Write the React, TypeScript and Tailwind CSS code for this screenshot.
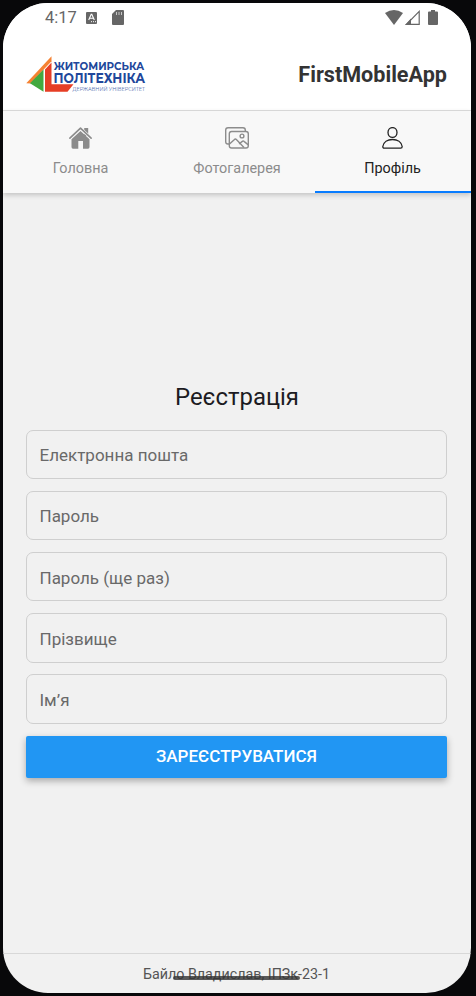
import React from "react";

const fields = ["Електронна пошта", "Пароль", "Пароль (ще раз)", "Прізвище", "Ім’я"];

function Logo() {
  return (
    <svg className="h-[38px] w-[120px] overflow-visible" viewBox="0 0 120 38">
      <path d="M.3 27.200 25.500.200v5L4.500 27.600Z" fill="#f58232" />
      <path d="M4 27.200 17.500 13.500V35.800Z" fill="#43a93f" />
      <path d="M19 13.500 25.500 6.500v21.700h22L41.500 35.800H19Z" fill="#e63e25" />
      <g fill="#21479b" fontFamily="Montserrat, Inter, sans-serif">
        <text x="27.800" y="14" fontSize="10.300" fontWeight="700" textLength="90.500" lengthAdjust="spacingAndGlyphs">ЖИТОМИРСЬКА</text>
        <text x="27.500" y="26.800" fontSize="14" fontWeight="700" textLength="91.500" lengthAdjust="spacingAndGlyphs">ПОЛІТЕХНІКА</text>
        <text x="46.500" y="34.800" fontSize="5.600" textLength="72.500" lengthAdjust="spacingAndGlyphs" opacity=".8">ДЕРЖАВНИЙ УНІВЕРСИТЕТ</text>
      </g>
    </svg>
  );
}

function StatusBar() {
  return (
    <div className="flex h-[29px] items-center pl-[42px] pr-[33px] text-[#666]">
      <span className="w-[34px] whitespace-nowrap text-[16.5px] leading-[29px]">4:17</span>
      <svg className="ml-[7px] h-3 w-[11px]" viewBox="0 0 11 12">
        <rect width="11" height="12" rx="1" fill="#666" />
        <path d="M2.700 8 5.200 2.400h.6L8.300 8M3.700 6.200h3.600" fill="none" stroke="#fff" strokeWidth="1.100" />
        <path d="M5 9.700h1M7 9.700h1M9 9.700h1" stroke="#fff" />
      </svg>
      <svg className="ml-[15px] h-[15px] w-3" viewBox="0 0 12 15">
        <path d="M4 0h7q1 0 1 1v13q0 1-1 1H1q-1 0-1-1V4Z" fill="#666" />
        <path d="M4.500 2v3M7 2v3M9.500 2v3" stroke="#fff" strokeOpacity=".8" strokeWidth=".8" />
      </svg>
      <div className="ml-auto flex items-center">
        <svg className="h-[15px] w-[18px]" viewBox="0 0 18 15">
          <path d="M0 3Q9-3 18 3L9 15Z" fill="#666" />
        </svg>
        <svg className="ml-[2px] h-[15px] w-[15px]" viewBox="0 0 15 15">
          <path d="M1.500 14.300H14.200V1.400Z" fill="none" stroke="#666" strokeWidth="1.200" />
          <path d="m0 15 6-6.500V15Z" fill="#666" />
        </svg>
        <svg className="ml-[8px] h-[15px] w-[10px]" viewBox="0 0 10 15">
          <path d="M3 0h4v1.500h2q1 0 1 1V14q0 1-1 1H1q-1 0-1-1V2.500q0-1 1-1h2Z" fill="#666" />
        </svg>
      </div>
    </div>
  );
}

function HomeIcon() {
  return (
    <svg className="h-[22px] w-[23px]" viewBox="0 0 23 22">
      <path d="M15.200 1h4v8h-4Z" fill="#8c8c8c" />
      <path d="M.9 11.200 11.500 1.500l10.600 9.700" fill="none" stroke="#f8f8f8" strokeWidth="3" />
      <path d="M.9 11.200 11.500 1.200l10.600 10" fill="none" stroke="#8c8c8c" strokeWidth="1.600" strokeLinecap="round" strokeLinejoin="round" />
      <path d="m11.500 3.900 9 8.300V20q0 1.700-1.500 1.700h-5V14H9.300v7.700H4Q2.500 21.700 2.500 20v-7.800Z" fill="#8c8c8c" />
    </svg>
  );
}

function GalleryIcon() {
  return (
    <svg className="h-[22px] w-6" viewBox="0 0 24 22" fill="none" stroke="#8c8c8c" strokeWidth="1.400" strokeLinejoin="round">
      <path d="M4.300 17H3Q.7 17 .7 14.700V3Q.7.700 3 .7h15q2.300 0 2.300 2.300v1" />
      <rect x="4.300" y="4.500" width="19" height="16.500" rx="2.300" />
      <circle cx="17" cy="9" r="1.900" />
      <path d="m4.500 17 4.700-4.300q1.200-1.200 2.400 0L19 20.500M14 17l3-2.400q1.200-1 2.300 0l4 3.300" />
    </svg>
  );
}

function PersonIcon() {
  return (
    <svg className="h-[22px] w-[21px]" viewBox="0 0 21 22" fill="none" stroke="#222" strokeWidth="1.300">
      <ellipse cx="10.500" cy="5.500" rx="4.500" ry="4.900" />
      <path d="M.8 19.500C1.500 15 5.600 12.500 10.500 12.500s9 2.500 9.700 7q0 1.600-1.500 1.600H2.300Q.8 21.100.8 19.500Z" />
    </svg>
  );
}

export default function App() {
  return (
    <div className="h-[996px] w-[476px] bg-[#08080a] pl-[3px] pt-[3px] font-['Roboto','Noto_Sans',sans-serif]">
      <div className="flex h-[990px] w-[468px] flex-col overflow-hidden rounded-[45px] bg-[#f1f1f1]">
        <header className="h-[108px] shrink-0 border-b border-[#dedede] bg-white">
          <StatusBar />
          <div className="flex items-start justify-between pl-[23px] pr-[24px] pt-[24px]">
            <Logo />
            <h1 className="mt-[5px] text-[21.6px] font-bold leading-[28px] text-[#333]">FirstMobileApp</h1>
          </div>
        </header>
        <nav className="z-10 grid h-[82px] shrink-0 grid-cols-3 bg-[#f8f8f8] text-[14.4px] text-[#8c8c8c] shadow-[0_2px_5px_rgba(0,0,0,0.2)]">
          <div className="flex flex-col items-center pr-px pt-[16px]">
            <HomeIcon />
            <span className="mt-[11px] leading-[18px]">Головна</span>
          </div>
          <div className="flex flex-col items-center pt-[16px]">
            <GalleryIcon />
            <span className="mt-[11px] leading-[18px]">Фотогалерея</span>
          </div>
          <div className="flex flex-col items-center border-b-2 border-[#087cff] pr-px pt-[16px] text-[#222]">
            <PersonIcon />
            <span className="mt-[11px] leading-[18px]">Профіль</span>
          </div>
        </nav>
        <main className="flex flex-1 flex-col pl-[23px] pr-[24px] pt-[189px]">
          <h2 className="mb-[17.6px] pl-px text-center text-[23.9px] leading-[30px] text-[#1c1b22]">Реєстрація</h2>
          <form className="flex flex-col gap-[11.8px]">
            {fields.map((label) => (
              <input
                key={label}
                aria-label={label}
                placeholder={label}
                className="h-[49.4px] w-full rounded-[7px] border border-[#cfcfcf] bg-transparent px-[12.5px] pt-[2px] text-[17px] text-[#333] placeholder:text-[#696969]"
              />
            ))}
            <button type="button" className="h-[42px] rounded-[2px] bg-[#2196f3] pt-px text-[17px] font-medium text-white shadow-[0_3px_7px_rgba(0,0,0,0.3)]">
              ЗАРЕЄСТРУВАТИСЯ
            </button>
          </form>
        </main>
        <footer className="relative h-[40px] shrink-0 border-t border-[#d8d8d8] pr-px text-center text-[14.3px] leading-[41px] text-[#555]">
          <span>Байло Владислав, ІПЗк-23-1</span>
          <div className="absolute left-[170px] top-[22px] h-1 w-[127px] rounded-full bg-[#333]/80" />
        </footer>
      </div>
    </div>
  );
}
